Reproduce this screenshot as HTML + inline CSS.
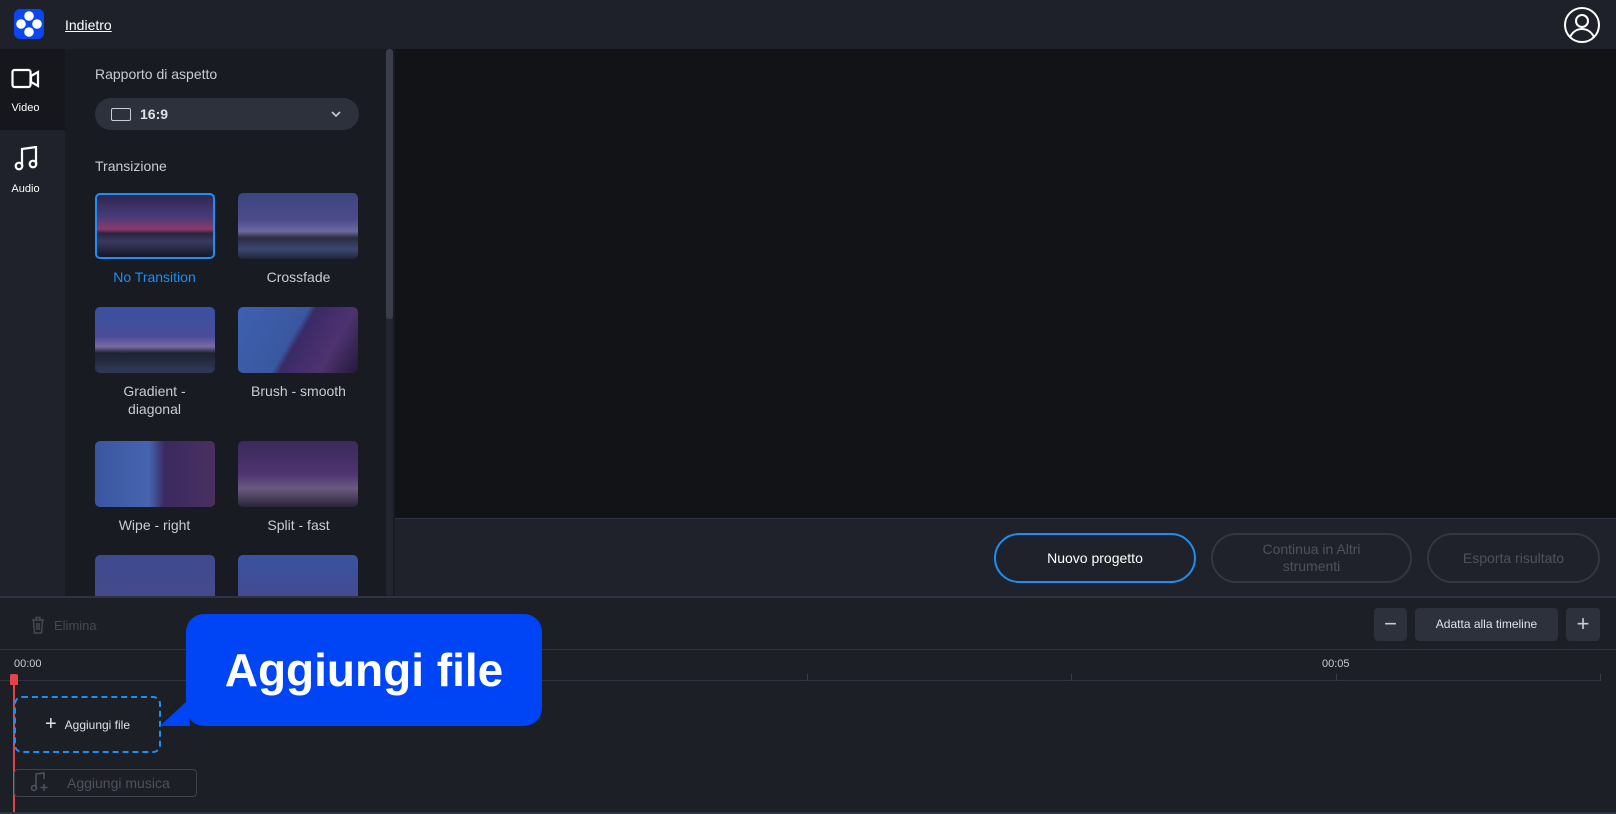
<!DOCTYPE html>
<html><head><meta charset="utf-8"><style>
*{box-sizing:border-box;margin:0;padding:0}
body{width:1616px;height:814px;overflow:hidden;background:#1e2129;font-family:"Liberation Sans",sans-serif;position:relative;color:#fff}
.a{position:absolute}
.top{left:0;top:0;width:1616px;height:49px;background:#1e2129}
.nav{left:0;top:49px;width:65px;height:547px;background:#1f222b}
.panel{left:65px;top:49px;width:330px;height:547px;background:#181b22;overflow:hidden}
.prev{left:395px;top:49px;width:1221px;height:469px;background:#121317}
.bar{left:395px;top:518px;width:1221px;height:78px;background:#1f222b;border-top:1px solid #2d3340}
.thumb{position:absolute;width:120px;height:66px;border-radius:5px;overflow:hidden}
.lbl{position:absolute;width:145px;text-align:center;font-size:14px;color:#c9ccd3;line-height:18px}
.btn{position:absolute;top:533px;height:50px;border-radius:25px;border:2px solid #33373f;color:#4d525c;font-size:14px;display:flex;align-items:center;justify-content:center;text-align:center;line-height:17px}
</style></head><body>
<div class="a top"></div>
<div class="a" style="left:14px;top:9px;width:30px;height:30px;background:#0b47f0;border-radius:6px">
<svg width="30" height="30"><circle cx="15" cy="7" r="4.8" fill="#fff"/><circle cx="7" cy="15" r="4.8" fill="#fff"/><circle cx="23" cy="15" r="4.8" fill="#fff"/><circle cx="15" cy="23" r="4.8" fill="#fff"/></svg></div>
<div class="a" style="left:65px;top:17px;font-size:14px;text-decoration:underline;color:#fff">Indietro</div>
<svg class="a" style="left:1563px;top:6px" width="38" height="38" viewBox="0 0 38 38" fill="none" stroke="#fff" stroke-width="2"><circle cx="19" cy="19" r="17"/><circle cx="19" cy="15" r="6"/><path d="M7 31c3-6 8-8 12-8s9 2 12 8"/></svg>

<div class="a nav"></div>
<div class="a" style="left:0;top:49px;width:65px;height:81px;background:#15171d"></div>
<svg class="a" style="left:11px;top:68px" width="29" height="22" viewBox="0 0 29 22" fill="none" stroke="#fff" stroke-width="2.2"><rect x="1.5" y="2" width="18" height="17" rx="2"/><path d="M20 8l7-4v14l-7-4z"/></svg>
<div class="a" style="left:0;top:102px;width:51px;text-align:center;font-size:11px">Video</div>
<svg class="a" style="left:14px;top:146px" width="24" height="26" viewBox="0 0 24 26" fill="none" stroke="#fff" stroke-width="2.2"><path d="M8 20V3l14-2v17"/><circle cx="5" cy="20" r="3.3"/><circle cx="19" cy="18" r="3.3"/></svg>
<div class="a" style="left:0;top:183px;width:51px;text-align:center;font-size:11px">Audio</div>

<div class="a panel">
<div class="a" style="left:30px;top:17px;font-size:14px;color:#c9ccd3">Rapporto di aspetto</div>
<div class="a" style="left:30px;top:49px;width:264px;height:32px;border-radius:16px;background:#2d313c">
<div class="a" style="left:16px;top:10px;width:20px;height:13px;border:1.5px solid #c9ccd3;border-radius:2px"></div>
<div class="a" style="left:45px;top:8px;font-size:14px;font-weight:bold;color:#dfe1e6">16:9</div>
<svg class="a" style="left:236px;top:12px" width="10" height="8" viewBox="0 0 10 8" fill="none" stroke="#c9ccd3" stroke-width="1.6"><path d="M1 2l4 4 4-4"/></svg></div>
<div class="a" style="left:30px;top:109px;font-size:14px;color:#c9ccd3">Transizione</div>
<div class="thumb" style="left:30px;top:144px;border:2px solid #1d8ff2;background:linear-gradient(180deg,#2e2650 0%,#4a3a7a 35%,#8a3a6a 55%,#2a2440 62%,#3a3a60 75%,#15162a 100%)"></div>
<div class="thumb" style="left:173px;top:144px;background:linear-gradient(180deg,#3a4680 0%,#4e4a8a 40%,#6a6aa0 58%,#2c2c40 68%,#3a4870 85%,#222538 100%)"></div>
<div class="lbl" style="left:17px;top:219px;color:#1d8ff2">No Transition</div>
<div class="lbl" style="left:161px;top:219px">Crossfade</div>
<div class="thumb" style="left:30px;top:258px;background:linear-gradient(180deg,#3a50a0 0%,#4a4e98 45%,#7a6aa6 60%,#1e2230 70%,#2e3a5a 100%)"></div>
<div class="thumb" style="left:173px;top:258px;background:linear-gradient(120deg,#3e60b0 0%,#3a58a0 45%,#3a2a66 50%,#4e3270 75%,#221a38 100%)"></div>
<div class="lbl" style="left:17px;top:333px">Gradient -<br>diagonal</div>
<div class="lbl" style="left:161px;top:333px">Brush - smooth</div>
<div class="thumb" style="left:30px;top:392px;background:linear-gradient(90deg,#3a56a0 0%,#4664b0 45%,#3a2a60 58%,#4a3060 100%)"></div>
<div class="thumb" style="left:173px;top:392px;background:linear-gradient(180deg,#3a2a5a 0%,#4e3470 50%,#6a5a80 72%,#2a2438 100%)"></div>
<div class="lbl" style="left:17px;top:467px">Wipe - right</div>
<div class="lbl" style="left:161px;top:467px">Split - fast</div>
<div class="thumb" style="left:30px;top:506px;background:linear-gradient(180deg,#3e4a90,#4a4a88)"></div>
<div class="thumb" style="left:173px;top:506px;background:linear-gradient(180deg,#3a52a0,#4a4688)"></div>
<div class="a" style="left:321px;top:0;width:7px;height:547px;background:#23262e;border-radius:3px"></div>
<div class="a" style="left:321px;top:0;width:7px;height:270px;background:#3a3e48;border-radius:3px"></div>
</div>

<div class="a prev"></div>
<div class="a bar"></div>
<div class="btn" style="left:994px;width:202px;border-color:#1d8ff2;color:#fff">Nuovo progetto</div>
<div class="btn" style="left:1211px;width:201px">Continua in Altri<br>strumenti</div>
<div class="btn" style="left:1427px;width:173px">Esporta risultato</div>

<div class="a" style="left:0;top:596px;width:1616px;height:2px;background:#2d3340"></div>
<div class="a" style="left:0;top:598px;width:1616px;height:216px;background:#1c1f26"></div>
<svg class="a" style="left:31px;top:616px" width="14" height="18" viewBox="0 0 14 18" fill="none" stroke="#444953" stroke-width="1.5"><path d="M1 4h12M5 4V1.5h4V4M2.5 4l1 13h7l1-13M6 7v7M8 7v7"/></svg>
<div class="a" style="left:54px;top:618px;font-size:13px;color:#444953">Elimina</div>
<div class="a" style="left:1374px;top:608px;width:33px;height:33px;border-radius:4px;background:#2d313c;font-size:22px;color:#c9ccd3;text-align:center;line-height:31px">&minus;</div>
<div class="a" style="left:1415px;top:608px;width:143px;height:33px;border-radius:4px;background:#2d313c;font-size:12px;color:#dfe1e6;text-align:center;line-height:33px">Adatta alla timeline</div>
<div class="a" style="left:1566px;top:608px;width:34px;height:33px;border-radius:4px;background:#2d313c;font-size:22px;color:#c9ccd3;text-align:center;line-height:31px">+</div>
<div class="a" style="left:0;top:649px;width:1616px;height:1px;background:#2d3340"></div>
<div class="a" style="left:14px;top:658px;font-size:11px;color:#c9ccd3">00:00</div>
<div class="a" style="left:1322px;top:658px;font-size:11px;color:#c9ccd3">00:05</div>
<div class="a" style="left:0;top:680px;width:1600px;height:1px;background:#2d3340"></div>
<div class="a" style="left:807px;top:674px;width:1px;height:7px;background:#3a3e48"></div>
<div class="a" style="left:1071px;top:674px;width:1px;height:7px;background:#3a3e48"></div>
<div class="a" style="left:1336px;top:674px;width:1px;height:7px;background:#3a3e48"></div>
<div class="a" style="left:1600px;top:674px;width:1px;height:7px;background:#3a3e48"></div>
<div class="a" style="left:13px;top:682px;width:2px;height:132px;background:#e0454a"></div>
<div class="a" style="left:10px;top:674px;width:8px;height:11px;background:#e0454a;border-radius:2px 2px 0 0"></div>
<div class="a" style="left:14px;top:696px;width:147px;height:57px;border:2px dashed #1d8ff2;border-radius:8px;font-size:12px;color:#dfe1e6;display:flex;align-items:center;justify-content:center"><span style="font-size:20px;margin-right:8px;font-weight:300">+</span>Aggiungi file</div>
<div class="a" style="left:14px;top:769px;width:183px;height:28px;border:1.5px solid #3e434d;border-radius:4px;font-size:14px;color:#4d525c;line-height:26px;padding-left:52px">Aggiungi musica</div>
<svg class="a" style="left:30px;top:771px" width="20" height="22" viewBox="0 0 20 22" fill="none" stroke="#4d525c" stroke-width="1.5"><path d="M6 17V3l8-1v6"/><circle cx="4" cy="17" r="2.5"/><path d="M14 13v7M10.5 16.5h7"/></svg>
<div class="a" style="left:0;top:812px;width:1616px;height:2px;background:#2d3340"></div>

<div class="a" style="left:186px;top:614px;width:356px;height:112px;background:#0045f5;border-radius:18px;color:#fff;font-size:46px;font-weight:bold;display:flex;align-items:center;justify-content:center">Aggiungi file</div>
<svg class="a" style="left:160px;top:700px" width="40" height="30"><path d="M28 0L0 26L30 26Z" fill="#0045f5"/></svg>
</body></html>
